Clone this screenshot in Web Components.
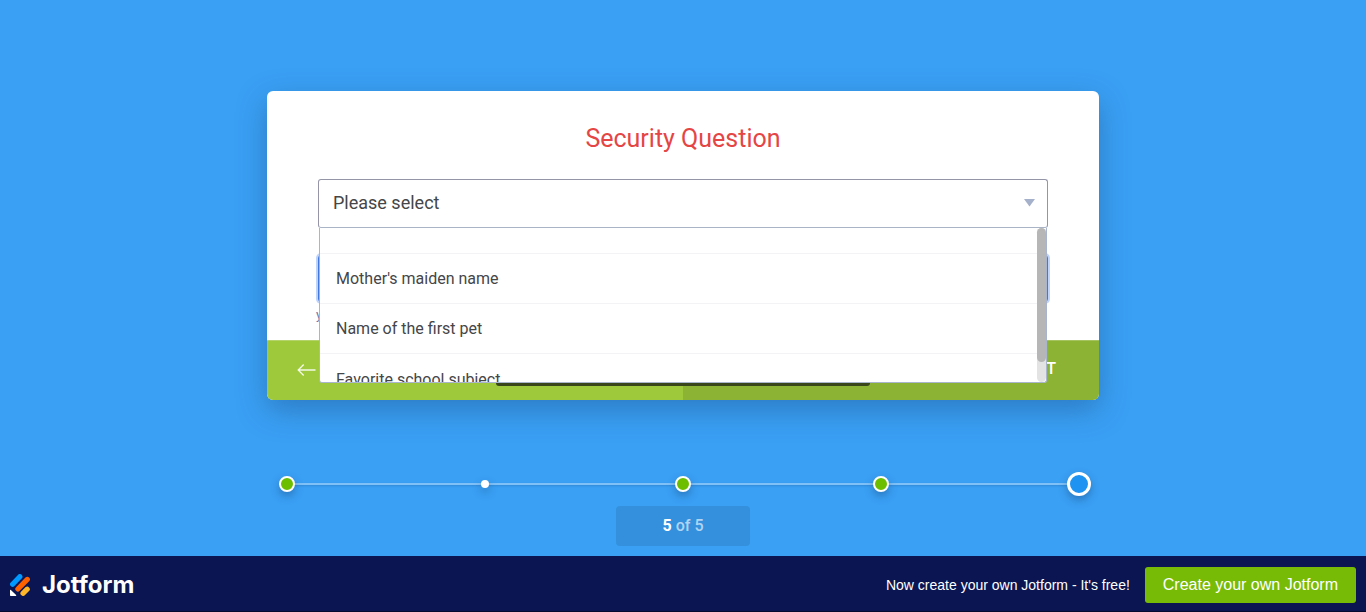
<!DOCTYPE html>
<html lang="en">
<head>
<meta charset="utf-8">
<meta name="viewport" content="width=device-width, initial-scale=1">
<title>Security Question</title>
<style>
html, body { margin: 0; background: #3aa0f4; font-family: Roboto, sans-serif; }
</style>
</head>
<body>
<form-page>
  <question-card heading="Security Question">
    <choice-list slot="field" placeholder="Please select"
      options="Mother's maiden name|Name of the first pet|Favorite school subject"></choice-list>
  </question-card>
  <step-progress slot="progress" steps="done,empty,done,done,current"></step-progress>
  <brand-bar slot="footer">Now create your own Jotform - It's free!</brand-bar>
</form-page>

<script>
const attach = (el, html) => {
  const t = document.createElement('template');
  t.innerHTML = '<style>*, *::before, *::after { box-sizing: border-box; }</style>' + html;
  el.attachShadow({ mode: 'open' }).append(t.content.cloneNode(true));
  return el.shadowRoot;
};

customElements.define('form-page', class extends HTMLElement {
  constructor() {
    super();
    attach(this, `
      <style>
        :host { display: flex; flex-direction: column; min-height: 100vh; }
        main { flex: 1; display: flex; flex-direction: column; align-items: center; gap: 72px; padding: 91px 16px 10px; }
      </style>
      <main><slot></slot><slot name="progress"></slot></main>
      <slot name="footer"></slot>`);
  }
});

customElements.define('question-card', class extends HTMLElement {
  constructor() {
    super();
    const root = attach(this, `
      <style>
        :host { display: block; width: 100%; max-width: 832px; background: #fff; border-radius: 6px;
          box-shadow: 0 10px 30px rgba(24, 68, 120, .4); }
        .body { padding: 32px 51px 17px; }
        h1 { margin: 0 0 25px; font-size: 25px; line-height: 31px; font-weight: 400; text-align: center; color: #e54545; }
        .answer { display: block; width: 100%; height: 47px; margin-top: 27px; border: 1px solid #4277df; border-radius: 3px;
          outline: 0; box-shadow: 0 0 0 2px #bfd4fb; font: 18px/24px Roboto, sans-serif; padding: 0 14px; }
        .hint { display: block; margin: 5px 0 0 -2px; font-size: 13px; line-height: 16px; color: #6f76a7; }
        .nav { position: relative; display: grid; grid-template-columns: 1fr 1fr; height: 60px; border-radius: 0 0 6px 6px; overflow: hidden; }
        button { border: 0; border-top: 1px solid #b4d46b; margin: 0; font: 500 16px/20px Roboto, sans-serif; color: #fff; display: flex; align-items: center; }
        .prev { background: #9dc93b; padding: 0 30px 2px; justify-content: flex-start; }
        .next { background: #8cb334; padding: 0 43px 4px; justify-content: flex-end; border-top-color: #a5c35e; }
        .notice { position: absolute; left: 229px; right: 229px; bottom: 14px; height: 20px; border-radius: 3px; background: #38461a; }
      </style>
      <div class="body">
        <h1></h1>
        <slot name="field"></slot>
        <input class="answer" type="text" id="answer" aria-label="Answer">
        <label class="hint" for="answer">y</label>
      </div>
      <div class="nav">
        <button class="prev" type="button" aria-label="Previous">
          <svg width="19" height="14" viewBox="0 0 19 14" fill="none" stroke="#f4f9e8" stroke-width="1.3"><path d="M18.5 7H1.2M6.7 1.5L1.2 7l5.5 5.5"/></svg>
        </button>
        <button class="next" type="button">SUBMIT</button>
        <div class="notice"></div>
      </div>`);
    root.querySelector('h1').textContent = this.getAttribute('heading');
  }
});

customElements.define('choice-list', class extends HTMLElement {
  constructor() {
    super();
    const root = attach(this, `
      <style>
        :host { display: block; position: relative; color: #454648; }
        select { display: block; appearance: none; width: 100%; height: 49px; padding: 0 40px 2px 14px; margin: 0;
          border: 1px solid #9496a8; border-bottom-color: #a9b5c6; border-radius: 3px; outline: 0; background: #fff; color: inherit; font: 18px/24px Roboto, sans-serif; }
        .arrow { position: absolute; top: 20px; right: 13px; pointer-events: none; }
        .menu { position: absolute; z-index: 2; top: 49px; left: 1px; right: 1px; height: 155px; display: flex;
          background: #fff; border: 1px solid #a9b5cc; border-top: 0; border-radius: 0 0 3px 3px; overflow: hidden; }
        ul { flex: 1; margin: 0; padding: 0; list-style: none; }
        li { height: 50px; padding: 0 16px; border-bottom: 1px solid #f3f3f5; font-size: 16px; line-height: 49px; }
        li.blank { height: 26px; }
        li:last-child { line-height: 52px; }
        .bar { width: 9px; background: #e3e3e3; border-radius: 5px; }
        .thumb { height: 134px; background: #b6b6b6; border-radius: 5px; }
      </style>
      <select aria-label="Security question"><option></option></select>
      <svg class="arrow" width="11" height="8" viewBox="0 0 11 8"><path d="M0 0h11L5.500 7.500z" fill="#a5b1cb"/></svg>
      <div class="menu">
        <ul role="listbox" aria-label="Security question choices"><li class="blank" role="option"></li></ul>
        <div class="bar"><div class="thumb"></div></div>
      </div>`);
    root.querySelector('option').textContent = this.getAttribute('placeholder');
    for (const text of this.getAttribute('options').split('|')) {
      const li = document.createElement('li');
      li.setAttribute('role', 'option');
      li.textContent = text;
      root.querySelector('ul').append(li);
    }
  }
});

customElements.define('step-progress', class extends HTMLElement {
  constructor() {
    super();
    const root = attach(this, `
      <style>
        :host { display: flex; flex-direction: column; align-items: center; gap: 10px; width: 100%; max-width: 816px; }
        ol { position: relative; display: flex; justify-content: space-between; width: 100%; height: 24px; margin: 0; padding: 0; list-style: none; }
        ol::before { content: ""; position: absolute; left: 12px; right: 12px; top: 11px; height: 2px; background: #80c1f8; box-shadow: 0 1px 2px rgba(20, 70, 130, .25); }
        li { position: relative; width: 24px; height: 24px; display: grid; place-items: center; }
        li::before { content: ""; border-radius: 50%; background: #fff; width: 8px; height: 8px; box-shadow: 0 4px 8px rgba(20, 60, 110, .4); }
        .done::before { width: 16px; height: 16px; border: 2px solid #fff; background: #6dbe00; }
        .current::before { width: 24px; height: 24px; border: 3px solid #fff; background: #1f93f1; }
        p { margin: 0; width: 134px; height: 40px; border-radius: 4px; background: #3490dc; text-align: center; font-size: 16px; line-height: 39px; font-weight: 500; color: #b0d4f3; }
        b { font-weight: 700; color: #fff; }
      </style>
      <ol></ol>
      <p><b></b> of <span></span></p>`);
    const steps = this.getAttribute('steps').split(',');
    for (const s of steps) {
      const li = document.createElement('li');
      li.className = s;
      root.querySelector('ol').append(li);
    }
    root.querySelector('b').textContent = steps.indexOf('current') + 1;
    root.querySelector('span').textContent = steps.length;
  }
});

customElements.define('brand-bar', class extends HTMLElement {
  constructor() {
    super();
    attach(this, `
      <style>
        :host { display: flex; box-sizing: border-box; align-items: center; height: 56px; padding: 2px 10px 0; background: #0a1551; border-bottom: 1px solid #050b30;
          font: 14px/20px "Liberation Sans", Arial, sans-serif; color: #fff; }
        a { color: inherit; text-decoration: none; }
        .logo { display: flex; align-items: center; gap: 12px; font: 700 24px/28px Inter, sans-serif; }
        .text { margin-left: auto; }
        .cta { margin-left: 15px; padding: 0 18px; border-radius: 3px; background: #78bb07; font-size: 16px; line-height: 36px; }
      </style>
      <a class="logo" href="#">
        <svg width="20" height="22" viewBox="0 0 20 22" fill="none" stroke-linecap="round">
          <path d="M2.600 10.200L9.800 2.700" stroke="#0099ff" stroke-width="5.200"/>
          <path d="M7.900 15L17.300 5.400" stroke="#ff6100" stroke-width="5.200"/>
          <path d="M13 19.300L17.200 15.200" stroke="#ffb629" stroke-width="5.200"/>
          <path d="M0 16.300v4.700c0 .6.400 1 1 1h4.700c.5 0 .7-.6.400-1L.9 15.900c-.3-.3-.9-.1-.9.400z" fill="#fff"/>
        </svg>
        <span>Jotform</span>
      </a>
      <span class="text"><slot></slot></span>
      <a class="cta" href="#">Create your own Jotform</a>`);
  }
});
</script>
</body>
</html>
